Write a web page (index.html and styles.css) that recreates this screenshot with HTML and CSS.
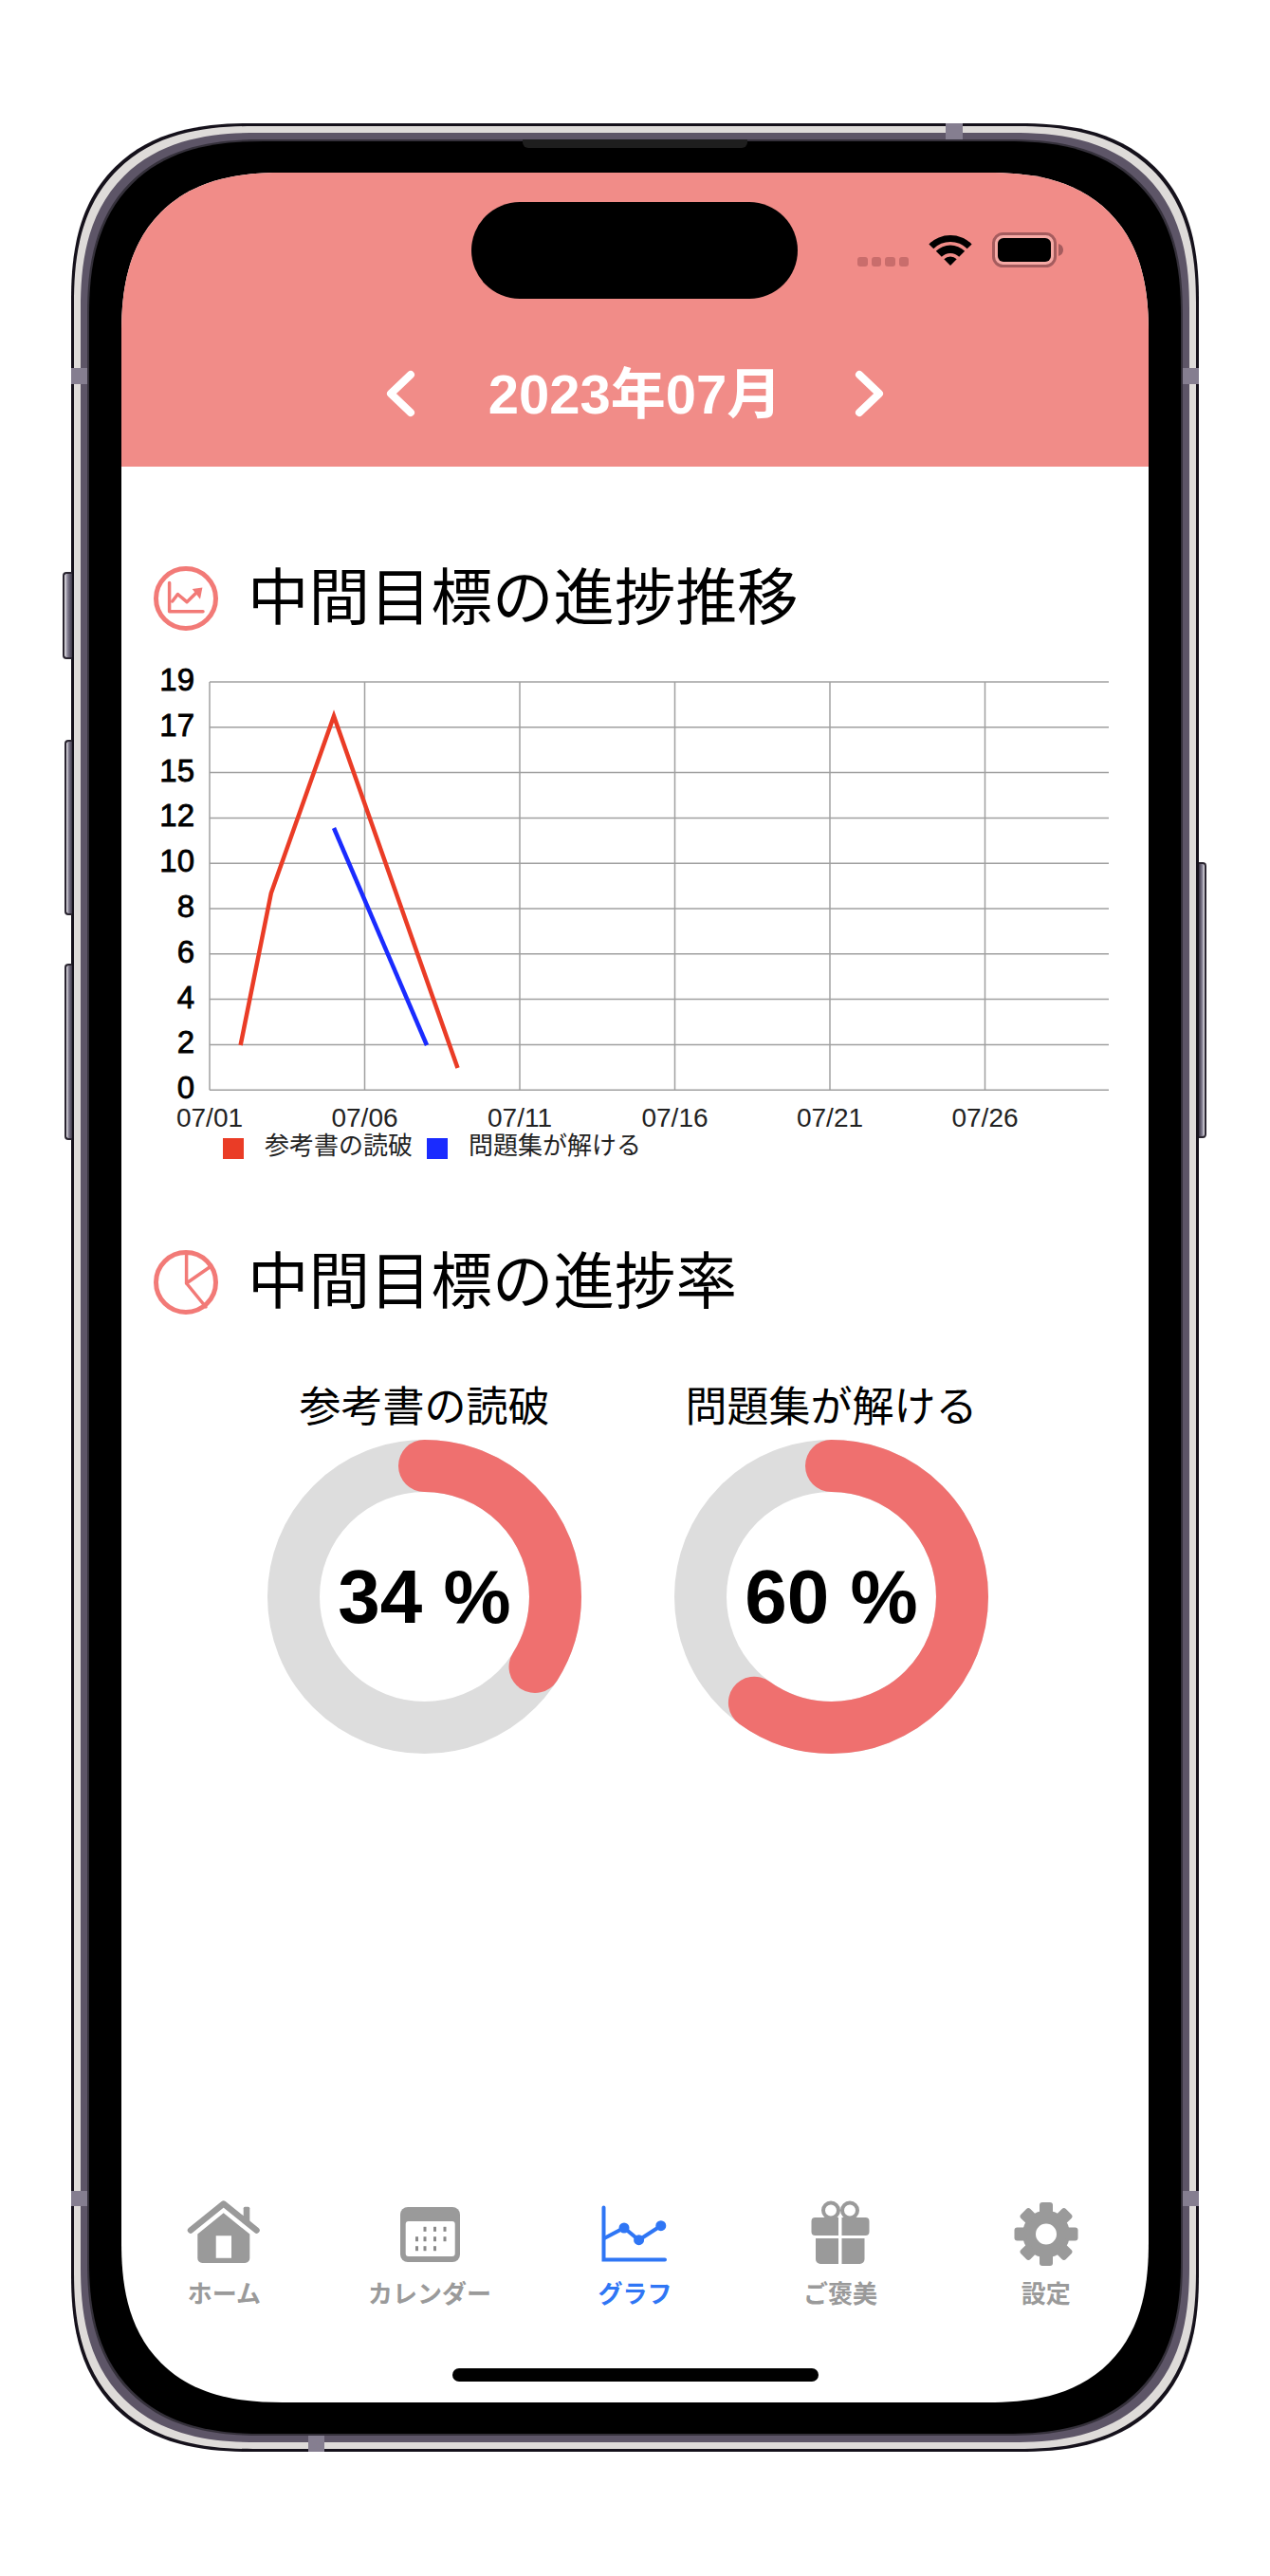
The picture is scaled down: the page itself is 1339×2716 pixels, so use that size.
FILE: index.html
```html
<!DOCTYPE html>
<html lang="ja">
<head>
    <meta charset="UTF-8">
    <title>グラフ</title>
    <meta name="viewport" content="width=device-width, initial-scale=1.0">
    <link rel="stylesheet" href="styles.css">
</head>
<body>
    <div class="phone">
        <span class="btn btn-mute"></span>
        <span class="btn btn-vol-up"></span>
        <span class="btn btn-vol-down"></span>
        <span class="btn btn-power"></span>
        <span class="band band-top"></span>
        <span class="band band-bottom"></span>
        <span class="band band-left-a"></span>
        <span class="band band-left-b"></span>
        <span class="band band-right-a"></span>
        <span class="band band-right-b"></span>
        <span class="speaker"></span>

        <div class="screen">
            <span class="island"></span>

            <header class="header">
                <div class="status">
                    <div class="signal"><i></i><i></i><i></i><i></i></div>
                    <svg class="wifi" width="46" height="34" viewBox="0 0 46 34">
                        <path d="M.4 11.400A32 32 0 0 1 45.600 11.400L40.700 16.300A25 25 0 0 0 5.300 16.300Z"/>
                        <path d="M7.800 18.800A21.500 21.500 0 0 1 38.200 18.800L32.200 24.800A13 13 0 0 0 13.800 24.800Z"/>
                        <path d="M16.300 27.300A9.500 9.500 0 0 1 29.700 27.300L23 34Z"/>
                    </svg>
                    <svg class="battery" width="75" height="37" viewBox="0 0 75 37">
                        <rect x="1.500" y="1.500" width="65" height="34" rx="10" fill="#f6a9a5" stroke="#a55c5e" stroke-width="3"/>
                        <rect x="6" y="6" width="56" height="25" rx="6"/>
                        <path d="M70 12C73 13 75 15 75 18.500C75 22 73 24 70 25Z" fill="#a55c5e"/>
                    </svg>
                </div>
                <div class="month-nav">
                    <svg width="32" height="50" viewBox="0 0 32 50"><polyline class="chevron" points="27,5 6,25 27,45"/></svg>
                    <h1 class="month">2023年07月</h1>
                    <svg width="32" height="50" viewBox="0 0 32 50"><polyline class="chevron" points="5,5 26,25 5,45"/></svg>
                </div>
            </header>

            <main class="content">
                <div class="section-head first">
                    <svg width="68" height="68" viewBox="0 0 68 68">
                        <circle class="ic" cx="34" cy="34" r="31.500"/>
                        <polyline class="ic ic-thin" points="16.600,17.400 16.600,47.700 52,47.700"/>
                        <polyline class="ic ic-thin" points="19.700,37 25.400,29.500 35,37.700 46,27"/>
                        <path class="ic-fill" d="M40.700 23.900L51.400 22.600L49 34.700Z"/>
                    </svg>
                    <h2>中間目標の進捗推移</h2>
                </div>

                <svg class="chart" width="1083" height="505" viewBox="0 0 1083 505">
                    <g class="grid">
                        <line x1="93" x2="1041" y1="28" y2="28"/>
                        <line x1="93" x2="1041" y1="75.800" y2="75.800"/>
                        <line x1="93" x2="1041" y1="123.600" y2="123.600"/>
                        <line x1="93" x2="1041" y1="171.400" y2="171.400"/>
                        <line x1="93" x2="1041" y1="219.200" y2="219.200"/>
                        <line x1="93" x2="1041" y1="267" y2="267"/>
                        <line x1="93" x2="1041" y1="314.800" y2="314.800"/>
                        <line x1="93" x2="1041" y1="362.600" y2="362.600"/>
                        <line x1="93" x2="1041" y1="410.400" y2="410.400"/>
                        <line x1="93" x2="1041" y1="458.200" y2="458.200"/>
                        <line x1="93" x2="93" y1="28" y2="458.200"/>
                        <line x1="256.500" x2="256.500" y1="28" y2="458.200"/>
                        <line x1="420" x2="420" y1="28" y2="458.200"/>
                        <line x1="583.500" x2="583.500" y1="28" y2="458.200"/>
                        <line x1="747" x2="747" y1="28" y2="458.200"/>
                        <line x1="910.500" x2="910.500" y1="28" y2="458.200"/>
                    </g>
                    <polyline class="series series-red" points="125.600,411 157.800,250.800 224,64 354.500,435"/>
                    <polyline class="series series-blue" points="224,182 322,411"/>
                    <g class="y-labels">
                        <text x="77" y="37">19</text>
                        <text x="77" y="85">17</text>
                        <text x="77" y="133">15</text>
                        <text x="77" y="180">12</text>
                        <text x="77" y="228">10</text>
                        <text x="77" y="276">8</text>
                        <text x="77" y="324">6</text>
                        <text x="77" y="372">4</text>
                        <text x="77" y="419">2</text>
                        <text x="77" y="467">0</text>
                    </g>
                    <g class="x-labels">
                        <text x="93" y="497">07/01</text>
                        <text x="256.500" y="497">07/06</text>
                        <text x="420" y="497">07/11</text>
                        <text x="583.500" y="497">07/16</text>
                        <text x="747" y="497">07/21</text>
                        <text x="910.500" y="497">07/26</text>
                    </g>
                </svg>

                <div class="legend">
                    <span class="swatch swatch-red"></span><span class="legend-label">参考書の読破</span>
                    <span class="swatch swatch-blue"></span><span class="legend-label">問題集が解ける</span>
                </div>

                <div class="section-head second">
                    <svg width="68" height="68" viewBox="0 0 68 68">
                        <circle class="ic" cx="34" cy="34" r="31.500"/>
                        <polyline class="ic ic-thin" points="34.600,3 34.600,35 60.500,17"/>
                        <line class="ic ic-thin" x1="34.600" y1="35" x2="55" y2="60"/>
                    </svg>
                    <h2>中間目標の進捗率</h2>
                </div>

                <div class="donuts">
                    <div class="donut-col">
                        <p class="donut-title">参考書の読破</p>
                        <div class="donut">
                            <svg width="331" height="331" viewBox="0 0 331 331">
                                <circle class="track" cx="165.500" cy="165.500" r="138"/>
                                <circle class="arc" cx="165.500" cy="165.500" r="138" pathLength="100" stroke-dasharray="34 100" transform="rotate(-90 165.500 165.500)"/>
                            </svg>
                            <span class="pct">34 %</span>
                        </div>
                    </div>
                    <div class="donut-col">
                        <p class="donut-title">問題集が解ける</p>
                        <div class="donut">
                            <svg width="331" height="331" viewBox="0 0 331 331">
                                <circle class="track" cx="165.500" cy="165.500" r="138"/>
                                <circle class="arc" cx="165.500" cy="165.500" r="138" pathLength="100" stroke-dasharray="60 100" transform="rotate(-90 165.500 165.500)"/>
                            </svg>
                            <span class="pct">60 %</span>
                        </div>
                    </div>
                </div>
            </main>

            <nav class="tabs">
                <div class="tab">
                    <svg width="80" height="70" viewBox="0 0 80 70">
                        <rect x="60.700" y="6.700" width="6.600" height="18" rx="1.500"/>
                        <path class="roof" d="M5 31.500L39.700 3.500L74.500 31.500"/>
                        <path fill-rule="evenodd" d="M39.700 13.300L67.300 35.500V61A5 5 0 0 1 62.300 66H17.300A5 5 0 0 1 12.300 61V35.500ZM31.700 37.300V60.700H48V37.300Z"/>
                    </svg>
                    <span>ホーム</span>
                </div>
                <div class="tab">
                    <svg width="80" height="70" viewBox="0 0 80 70">
                        <rect x="9" y="7" width="63" height="58" rx="8"/>
                        <rect x="14.700" y="22" width="52" height="37" rx="3" fill="#fff"/>
                        <g class="cal-dots">
                            <rect x="33.500" y="27.800" width="3" height="5"/><rect x="44" y="27.800" width="3" height="5"/><rect x="54.500" y="27.800" width="3" height="5"/>
                            <rect x="25" y="38.200" width="3" height="5"/><rect x="33.500" y="38.200" width="3" height="5"/><rect x="44" y="38.200" width="3" height="5"/><rect x="54.500" y="38.200" width="3" height="5"/>
                            <rect x="25" y="48.200" width="3" height="5"/><rect x="33.500" y="48.200" width="3" height="5"/><rect x="44" y="48.200" width="3" height="5"/>
                        </g>
                    </svg>
                    <span>カレンダー</span>
                </div>
                <div class="tab tab-active">
                    <svg width="80" height="70" viewBox="0 0 80 70">
                        <polyline class="graph-axis" points="7.500,7.500 7.500,62.500 72,62.500"/>
                        <polyline class="graph-line" points="8,40 29,29 44.600,41.700 67.800,26.700"/>
                        <circle cx="29" cy="29" r="5.500"/><circle cx="44.600" cy="41.700" r="5.500"/><circle cx="67.800" cy="26.700" r="5.500"/>
                    </svg>
                    <span>グラフ</span>
                </div>
                <div class="tab">
                    <svg width="80" height="70" viewBox="0 0 80 70">
                        <ellipse class="bow" cx="30" cy="10.500" rx="8" ry="8"/>
                        <ellipse class="bow" cx="50" cy="10.500" rx="8" ry="8"/>
                        <path d="M9.500 22A4 4 0 0 1 13.500 18H38V37H13.500A4 4 0 0 1 9.500 33ZM41.500 18H66.500A4 4 0 0 1 70.500 22V33A4 4 0 0 1 66.500 37H41.500ZM14 40H38V67H19A5 5 0 0 1 14 62ZM41.500 40H65.500V62A5 5 0 0 1 60.500 67H41.500Z"/>
                    </svg>
                    <span>ご褒美</span>
                </div>
                <div class="tab">
                    <svg width="80" height="70" viewBox="0 0 80 70">
                        <g transform="translate(40 35.500)">
                            <path fill-rule="evenodd" d="M0-25A25 25 0 1 1 0 25A25 25 0 1 1 0-25ZM0-11A11 11 0 1 0 0 11A11 11 0 1 0 0-11Z"/>
                            <rect class="tooth" x="-7" y="-33.500" width="14" height="13" rx="3"/>
                            <rect class="tooth" x="-7" y="-33.500" width="14" height="13" rx="3" transform="rotate(45)"/>
                            <rect class="tooth" x="-7" y="-33.500" width="14" height="13" rx="3" transform="rotate(90)"/>
                            <rect class="tooth" x="-7" y="-33.500" width="14" height="13" rx="3" transform="rotate(135)"/>
                            <rect class="tooth" x="-7" y="-33.500" width="14" height="13" rx="3" transform="rotate(180)"/>
                            <rect class="tooth" x="-7" y="-33.500" width="14" height="13" rx="3" transform="rotate(225)"/>
                            <rect class="tooth" x="-7" y="-33.500" width="14" height="13" rx="3" transform="rotate(270)"/>
                            <rect class="tooth" x="-7" y="-33.500" width="14" height="13" rx="3" transform="rotate(315)"/>
                        </g>
                    </svg>
                    <span>設定</span>
                </div>
            </nav>

            <div class="home-bar"></div>
        </div>
    </div>
</body>
</html>
```

FILE: styles.css
```css
body {
    margin: 0;
    background: #fff;
    font-family: "Liberation Sans", "Noto Sans CJK JP", sans-serif;
    color: #000;
}
h1, h2, p {
    margin: 0;
    font-weight: 400;
}

/* device frame */
.phone {
    position: relative;
    box-sizing: border-box;
    width: 1151px;
    height: 2417px;
    margin: 149px 0 150px 94px;
    padding: 33px 34px;
    background: #000;
    border-radius: 166px;
    box-shadow: 0 0 0 2px #35313b, 0 0 0 9px #5d5567, 0 0 0 16px #dedbd9, 0 0 0 19px #15111b;
}
.band {
    position: absolute;
    background: #857e90;
}
.band-top { left: 903px; top: -19px; width: 18px; height: 17px; }
.band-bottom { left: 231px; bottom: -19px; width: 17px; height: 17px; }
.band-left-a { left: -19px; top: 239px; width: 17px; height: 17px; }
.band-left-b { left: -19px; top: 2161px; width: 17px; height: 16px; }
.band-right-a { right: -19px; top: 239px; width: 17px; height: 17px; }
.band-right-b { right: -19px; top: 2161px; width: 17px; height: 16px; }
.btn {
    position: absolute;
    box-sizing: border-box;
    border: 2px solid #2a2530;
    border-right: 0;
    border-radius: 4px 0 0 4px;
    background: linear-gradient(90deg, #e4e2e6, #7f7a8e 45%, #3a3544);
}
.btn-mute { left: -28px; top: 454px; width: 10px; height: 92px; }
.btn-vol-up { left: -26px; top: 631px; width: 8px; height: 185px; }
.btn-vol-down { left: -26px; top: 867px; width: 8px; height: 186px; }
.btn-power {
    right: -27px;
    top: 760px;
    width: 8px;
    height: 291px;
    border: 2px solid #2a2530;
    border-left: 0;
    border-radius: 0 4px 4px 0;
    background: linear-gradient(270deg, #e4e2e6, #7f7a8e 45%, #3a3544);
}
.speaker {
    position: absolute;
    left: 457px;
    top: -2px;
    width: 237px;
    height: 9px;
    background: #1e1e1e;
    border-radius: 0 0 6px 6px;
}

.screen {
    position: relative;
    display: flex;
    flex-direction: column;
    height: 2351px;
    background: #fff;
    border-radius: 148px;
    overflow: hidden;
}
/* continuous corners where the browser can draw them */
@supports (corner-shape: superellipse(1.3)) {
    .phone {
        border-radius: 184px;
        corner-shape: superellipse(1.3);
    }
    .screen {
        border-radius: 170px;
        corner-shape: superellipse(1.3);
    }
}
.island {
    position: absolute;
    left: 369px;
    top: 31px;
    width: 344px;
    height: 102px;
    background: #000;
    border-radius: 51px;
}

/* header */
.header {
    padding: 63px 90px 52px 0;
    background: #f18c88;
}
.status {
    display: flex;
    justify-content: flex-end;
    align-items: flex-end;
    gap: 21px;
    height: 37px;
}
.signal {
    display: flex;
    gap: 4px;
    margin-bottom: 1px;
}
.signal i {
    width: 10.500px;
    height: 10px;
    background: #c96d6c;
    border-radius: 3px;
}
.wifi {
    margin-bottom: 2px;
}
.month-nav {
    display: flex;
    justify-content: center;
    align-items: center;
    gap: 77px;
    margin: 108px -90px 0 0;
}
.month {
    font-size: 58px;
    line-height: 49px;
    font-weight: 700;
    color: #fff;
}
.chevron {
    fill: none;
    stroke: #fff;
    stroke-width: 8;
    stroke-linecap: round;
    stroke-linejoin: round;
}

/* content */
.content {
    flex: 1;
}
.section-head {
    display: flex;
    align-items: center;
    gap: 31px;
    padding-left: 34px;
}
.section-head.first {
    margin-top: 105px;
}
.section-head.second {
    margin-top: 94px;
}
.section-head h2 {
    font-size: 64.500px;
    line-height: 68px;
}
.ic {
    fill: none;
    stroke: #f27a77;
    stroke-width: 5;
}
.ic-thin {
    stroke-width: 3.500;
    stroke-linecap: round;
    stroke-linejoin: round;
}
.ic-fill {
    fill: #f27a77;
}

.chart {
    display: block;
    margin-top: 26px;
}
.grid line {
    stroke: #a0a0a0;
    stroke-width: 1.500;
}
.series {
    fill: none;
    stroke-width: 4.500;
}
.series-red { stroke: #ea3c26; }
.series-blue { stroke: #1a2bff; }
.y-labels text {
    font-size: 33px;
    text-anchor: end;
    stroke: #000;
    stroke-width: .8;
}
.x-labels text {
    font-size: 28px;
    text-anchor: middle;
    fill: #222;
}

.legend {
    display: flex;
    align-items: center;
    height: 26px;
    margin-top: 2px;
    padding-left: 107px;
    font-size: 26px;
    color: #222;
}
.swatch {
    width: 22px;
    height: 22px;
    margin-right: 22px;
}
.swatch-red { background: #ea3c26; }
.swatch-blue { background: #1a2bff; }
.legend-label {
    line-height: 26px;
    margin: -6px 15px 0 0;
}

.donuts {
    display: flex;
    gap: 98px;
    margin-top: 70px;
    padding-left: 154px;
}
.donut-col {
    width: 331px;
}
.donut-title {
    display: flex;
    justify-content: center;
    white-space: nowrap;
    font-size: 44px;
    line-height: 56px;
    margin-bottom: 6px;
}
.donut {
    position: relative;
    width: 331px;
    height: 331px;
}
.donut svg {
    display: block;
}
.track, .arc {
    fill: none;
    stroke-width: 55;
}
.track { stroke: #ddd; }
.arc {
    stroke: #ef706f;
    stroke-linecap: round;
}
.pct {
    position: absolute;
    inset: 0;
    display: flex;
    align-items: center;
    justify-content: center;
    font-size: 80px;
    font-weight: 700;
}

/* tab bar */
.tabs {
    display: grid;
    grid-template-columns: repeat(5, 1fr);
    color: #9a9a9a;
}
.tab {
    display: flex;
    flex-direction: column;
    align-items: center;
    font-size: 26px;
    line-height: 30px;
    font-weight: 700;
}
.tab svg {
    display: block;
    margin-bottom: 14px;
    fill: #9a9a9a;
}
.roof {
    fill: none;
    stroke: #9a9a9a;
    stroke-width: 6.500;
    stroke-linecap: round;
    stroke-linejoin: round;
}
.bow {
    fill: none;
    stroke: #9a9a9a;
    stroke-width: 4;
}
.cal-dots {
    fill: #8a8a8a;
}
.tab-active {
    color: #2f76f5;
}
.tab-active svg {
    fill: #2f76f5;
}
.graph-axis {
    fill: none;
    stroke: #2f76f5;
    stroke-width: 4;
    stroke-linecap: round;
}
.graph-line {
    fill: none;
    stroke: #2f76f5;
    stroke-width: 4;
}
.home-bar {
    width: 386px;
    height: 14px;
    margin: 63px auto 22px;
    background: #000;
    border-radius: 7px;
}
```
